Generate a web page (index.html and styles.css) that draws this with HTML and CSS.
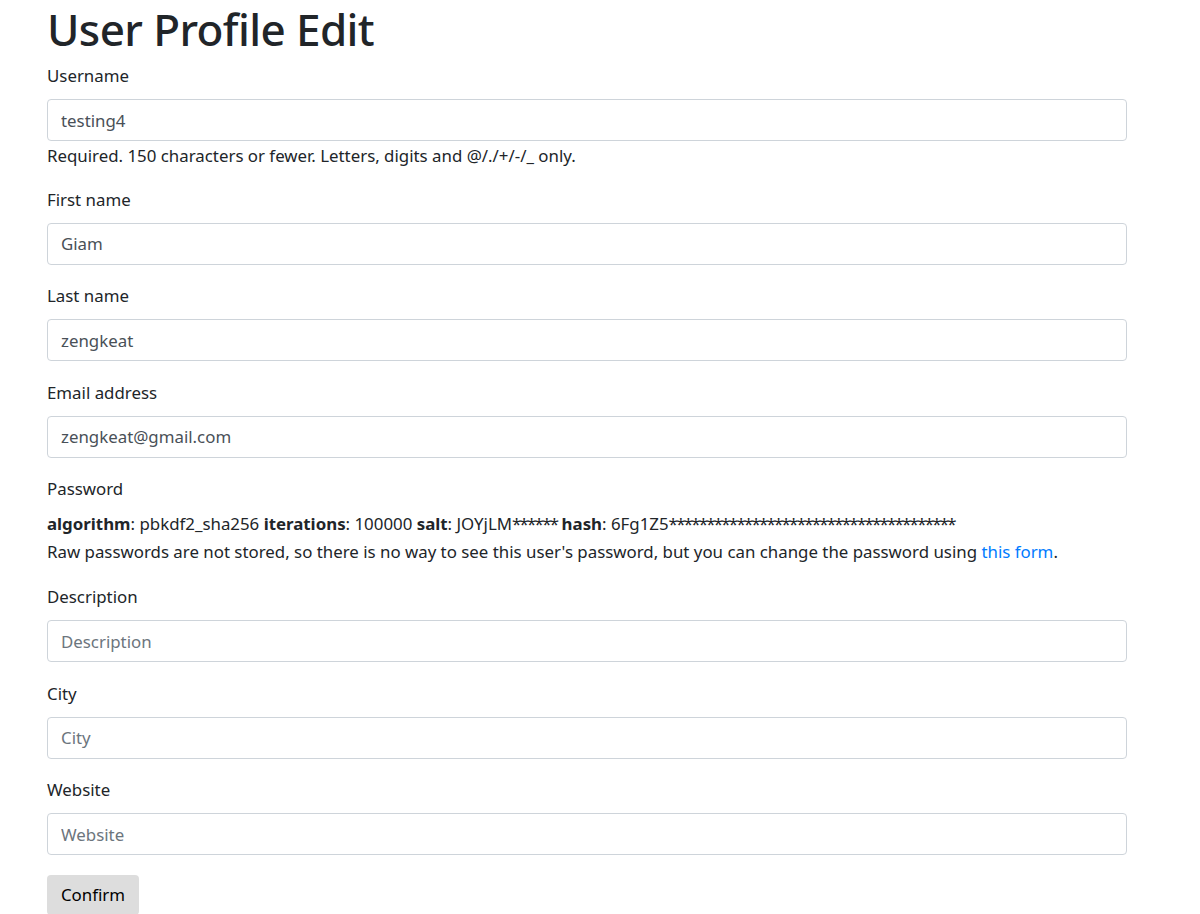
FILE: index.html
```html
<!DOCTYPE html>
<html lang="en">
<head>
<meta charset="utf-8">
<title>User Profile Edit</title>
<link rel="stylesheet" href="styles.css">
</head>
<body>
<div class="page">
  <h1 class="title">User Profile Edit</h1>
  <form class="form">
    <div class="group">
      <label class="label" for="username">Username</label>
      <input class="input" id="username" type="text" value="testing4">
      <div class="help">Required. 150 characters or fewer. Letters, digits and @/./+/-/_ only.</div>
    </div>
    <div class="group">
      <label class="label" for="first">First name</label>
      <input class="input" id="first" type="text" value="Giam">
    </div>
    <div class="group">
      <label class="label" for="last">Last name</label>
      <input class="input" id="last" type="text" value="zengkeat">
    </div>
    <div class="group">
      <label class="label" for="email">Email address</label>
      <input class="input" id="email" type="text" value="zengkeat@gmail.com">
    </div>
    <div class="group group-pw">
      <label class="label">Password</label>
      <div class="pwinfo"><strong>algorithm</strong>: pbkdf2_sha256 <strong>iterations</strong>: 100000 <strong>salt</strong>: JOYjLM<span class="stars">******</span> <strong>hash</strong>: 6Fg1Z5<span class="stars">**************************************</span></div>
      <div class="help">Raw passwords are not stored, so there is no way to see this user's password, but you can change the password using <a class="link" href="#">this form</a>.</div>
    </div>
    <div class="group">
      <label class="label" for="desc">Description</label>
      <input class="input" id="desc" type="text" placeholder="Description">
    </div>
    <div class="group">
      <label class="label" for="city">City</label>
      <input class="input" id="city" type="text" placeholder="City">
    </div>
    <div class="group">
      <label class="label" for="website">Website</label>
      <input class="input" id="website" type="text" placeholder="Website">
    </div>
    <button class="btn" type="button">Confirm</button>
  </form>
</div>
</body>
</html>
```

FILE: styles.css
```css
html, body {
  margin: 0;
  padding: 0;
  background: #fff;
}
body {
  font-family: "Noto Sans", "Open Sans", sans-serif;
  font-size: 16.85px;
  line-height: 24px;
  color: #212529;
}
.page {
  width: 1080px;
  margin-left: 47px;
}
.title {
  margin: 0 0 6px 0;
  padding-top: 0;
  font-size: 44px;
  line-height: 58px;
  font-weight: 500;
  letter-spacing: -0.6px;
  color: #212529;
}
.form {
  display: flex;
  flex-direction: column;
}
.group {
  display: flex;
  flex-direction: column;
  margin-bottom: 19.5px;
}
.group-pw {
  margin-bottom: 21px;
}
.label {
  display: block;
  line-height: 24px;
  margin-bottom: 11px;
}
.input {
  box-sizing: border-box;
  width: 100%;
  height: 42px;
  margin: 0;
  padding: 0 13px;
  border: 1px solid #ced4da;
  border-radius: 4px;
  font-family: inherit;
  font-size: 16.85px;
  color: #495057;
  background: #fff;
}
.input::placeholder {
  color: #6c757d;
  opacity: 1;
}
.help {
  margin-top: 3px;
  line-height: 24px;
}
.group-pw .help {
  margin-top: 4px;
}
.pwinfo {
  margin-top: 0;
  line-height: 24px;
}
.stars {
  letter-spacing: -1.75px;
}
.link {
  color: #007bff;
  text-decoration: none;
}
.btn {
  align-self: flex-start;
  box-sizing: border-box;
  width: 92px;
  height: 40px;
  margin-top: 0;
  padding: 0;
  border: none;
  border-radius: 4px;
  background: #dddddd;
  font-family: inherit;
  font-size: 16.85px;
  color: #000;
}
```
